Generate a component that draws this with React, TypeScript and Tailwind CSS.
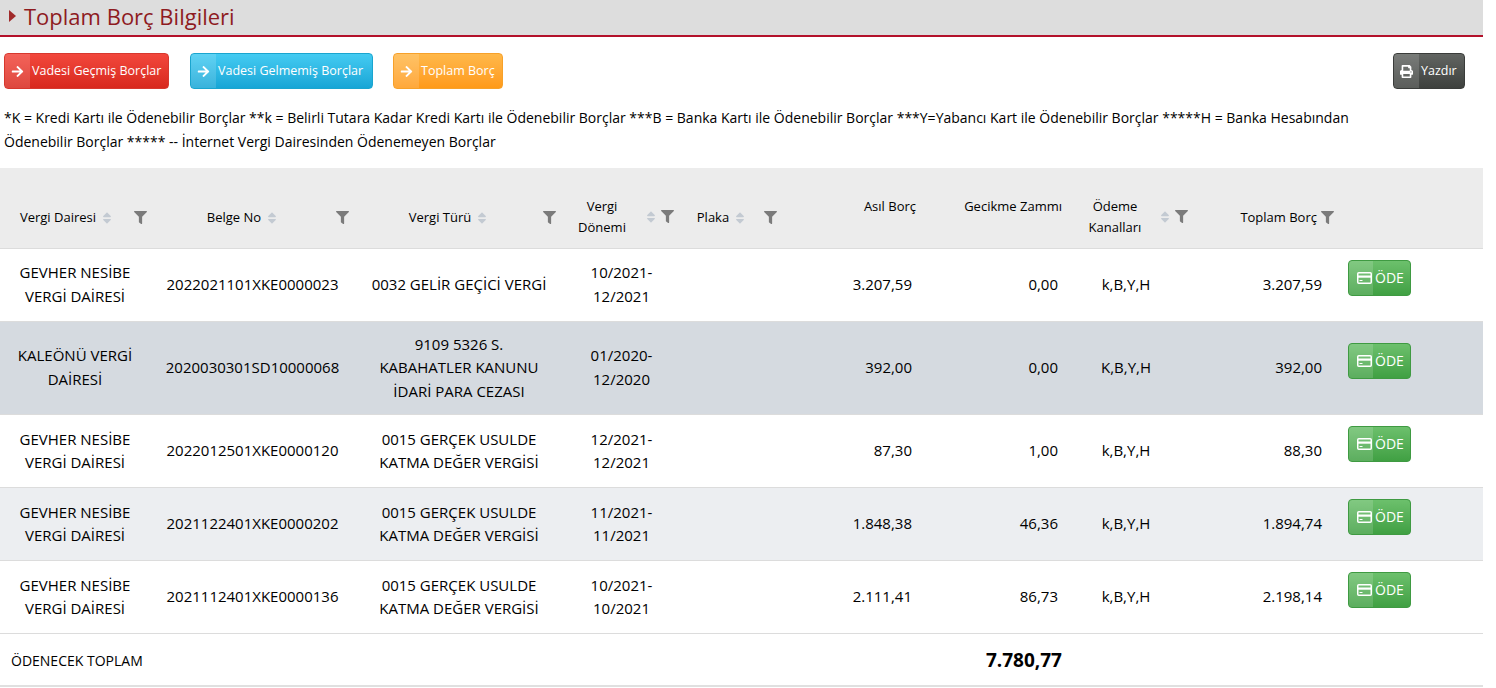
import { FaArrowRight, FaPrint, FaSort, FaFilter } from "react-icons/fa";

type Debt = {
  office: string[];
  docNo: string;
  taxType: string[];
  period: string[];
  plate: string;
  principal: string;
  interest: string;
  channels: string;
  total: string;
};

const debts: Debt[] = [
  {
    office: ["GEVHER NESİBE", "VERGİ DAİRESİ"],
    docNo: "2022021101XKE0000023",
    taxType: ["0032 GELİR GEÇİCİ VERGİ"],
    period: ["10/2021-", "12/2021"],
    plate: "",
    principal: "3.207,59",
    interest: "0,00",
    channels: "k,B,Y,H",
    total: "3.207,59",
  },
  {
    office: ["KALEÖNÜ VERGİ", "DAİRESİ"],
    docNo: "2020030301SD10000068",
    taxType: ["9109 5326 S.", "KABAHATLER KANUNU", "İDARİ PARA CEZASI"],
    period: ["01/2020-", "12/2020"],
    plate: "",
    principal: "392,00",
    interest: "0,00",
    channels: "K,B,Y,H",
    total: "392,00",
  },
  {
    office: ["GEVHER NESİBE", "VERGİ DAİRESİ"],
    docNo: "2022012501XKE0000120",
    taxType: ["0015 GERÇEK USULDE", "KATMA DEĞER VERGİSİ"],
    period: ["12/2021-", "12/2021"],
    plate: "",
    principal: "87,30",
    interest: "1,00",
    channels: "k,B,Y,H",
    total: "88,30",
  },
  {
    office: ["GEVHER NESİBE", "VERGİ DAİRESİ"],
    docNo: "2021122401XKE0000202",
    taxType: ["0015 GERÇEK USULDE", "KATMA DEĞER VERGİSİ"],
    period: ["11/2021-", "11/2021"],
    plate: "",
    principal: "1.848,38",
    interest: "46,36",
    channels: "k,B,Y,H",
    total: "1.894,74",
  },
  {
    office: ["GEVHER NESİBE", "VERGİ DAİRESİ"],
    docNo: "2021112401XKE0000136",
    taxType: ["0015 GERÇEK USULDE", "KATMA DEĞER VERGİSİ"],
    period: ["10/2021-", "10/2021"],
    plate: "",
    principal: "2.111,41",
    interest: "86,73",
    channels: "k,B,Y,H",
    total: "2.198,14",
  },
];

const rowBg = ["bg-white", "bg-[#d5dae0]", "bg-white", "bg-[#eceef1]", "bg-white"];

function Lines({ lines }: { lines: string[] }) {
  return (
    <>
      {lines.map((l, i) => (
        <div key={i}>{l}</div>
      ))}
    </>
  );
}

function Sort() {
  return <FaSort className="text-[#c3cad2] shrink-0" size={14} />;
}

function Filter() {
  return <FaFilter className="text-[#7b7b7b] shrink-0" size={13} />;
}

function CardIcon() {
  return (
    <svg width="15" height="12" viewBox="0 0 15 12" className="shrink-0">
      <rect x="0.75" y="0.75" width="13.5" height="10.5" rx="1" fill="none" stroke="#fff" strokeWidth="1.5" />
      <rect x="1" y="3.5" width="13" height="2.2" fill="#fff" />
      <rect x="2.5" y="8" width="3" height="1" fill="#fff" />
    </svg>
  );
}

function ActionButton({
  label,
  className,
  icon,
}: {
  label: string;
  className: string;
  icon: React.ReactNode;
}) {
  return (
    <button
      className={`flex h-[36px] items-stretch overflow-hidden whitespace-nowrap rounded-[4px] border text-[12.5px] text-white ${className}`}
    >
      <span className="flex w-[25px] shrink-0 items-center justify-center bg-white/15">{icon}</span>
      <span className="flex items-center pl-[2px] pr-[4px]">{label}</span>
    </button>
  );
}

export default function App() {
  return (
    <div className="w-[1483px] bg-white font-['Open_Sans',sans-serif] text-[#1a1a1a]">
      {/* Title */}
      <div className="flex h-[37px] items-center gap-[8px] border-b-2 border-[#b3112a] bg-[#dddddd] pb-[4px] pl-[9px]">
        <span className="h-0 w-0 border-y-[6px] border-l-[7px] border-y-transparent border-l-[#a02a2a]" />
        <h1 className="text-[22px] leading-none text-[#8e1b1f]">Toplam Borç Bilgileri</h1>
      </div>

      {/* Buttons */}
      <div className="mt-[16px] flex items-center pl-[4px] pr-[18px]">
        <ActionButton
          label="Vadesi Geçmiş Borçlar"
          className="w-[165px] border-[#d7382e] bg-gradient-to-b from-[#f2473c] to-[#d8281d]"
          icon={<FaArrowRight size={13} />}
        />
        <ActionButton
          label="Vadesi Gelmemiş Borçlar"
          className="ml-[21px] w-[183px] border-[#1aa5cf] bg-gradient-to-b from-[#43cbf2] to-[#16a6d6]"
          icon={<FaArrowRight size={13} />}
        />
        <ActionButton
          label="Toplam Borç"
          className="ml-[20px] w-[110px] border-[#f7a12a] bg-gradient-to-b from-[#ffb849] to-[#ff9a17]"
          icon={<FaArrowRight size={13} />}
        />
        <div className="flex-1" />
        <ActionButton
          label="Yazdır"
          className="w-[72px] border-[#3a3c3a] bg-gradient-to-b from-[#626562] to-[#3e413e]"
          icon={<FaPrint size={13} />}
        />
      </div>

      {/* Legend */}
      <p className="mt-[17px] pl-[4px] pr-[90px] text-[14px] leading-[24px] text-black">
        *K = Kredi Kartı ile Ödenebilir Borçlar **k = Belirli Tutara Kadar Kredi Kartı ile Ödenebilir Borçlar ***B = Banka
        Kartı ile Ödenebilir Borçlar ***Y=Yabancı Kart ile Ödenebilir Borçlar *****H = Banka Hesabından Ödenebilir Borçlar
        ***** -- İnternet Vergi Dairesinden Ödenemeyen Borçlar
      </p>

      {/* Table */}
      <table className="mt-[14px] w-full table-fixed border-collapse text-[15px]">
        <colgroup>
          <col className="w-[150px]" />
          <col className="w-[205px]" />
          <col className="w-[208px]" />
          <col className="w-[117px]" />
          <col className="w-[110px]" />
          <col className="w-[140px]" />
          <col className="w-[145px]" />
          <col className="w-[120px]" />
          <col className="w-[145px]" />
          <col className="w-[143px]" />
        </colgroup>
        <thead>
          <tr className="h-[80px] border-b border-[#dcdcdc] bg-[#ececec] text-[13px] text-black">
            <th className="p-0 align-middle font-normal">
              <div className="flex items-center pt-[20px] pr-[3px]">
                <div className="flex flex-1 items-center justify-center gap-[4px]">
                  <span>Vergi Dairesi</span>
                  <Sort />
                </div>
                <Filter />
              </div>
            </th>
            <th className="p-0 align-middle font-normal">
              <div className="flex items-center pt-[20px] pr-[6px]">
                <div className="flex flex-1 items-center justify-center gap-[4px]">
                  <span>Belge No</span>
                  <Sort />
                </div>
                <Filter />
              </div>
            </th>
            <th className="p-0 align-middle font-normal">
              <div className="flex items-center pt-[20px] pr-[7px]">
                <div className="flex flex-1 items-center justify-center gap-[4px]">
                  <span>Vergi Türü</span>
                  <Sort />
                </div>
                <Filter />
              </div>
            </th>
            <th className="p-0 align-middle font-normal">
              <div className="flex items-center gap-[3px] pt-[18px] pr-[6px] leading-[21px]">
                <div className="flex-1 text-center">
                  Vergi
                  <br />
                  Dönemi
                </div>
                <Sort />
                <Filter />
              </div>
            </th>
            <th className="p-0 align-middle font-normal">
              <div className="flex items-center pt-[20px] pr-[13px]">
                <div className="flex flex-1 items-center justify-center gap-[4px]">
                  <span>Plaka</span>
                  <Sort />
                </div>
                <Filter />
              </div>
            </th>
            <th className="p-0 pr-[14px] text-right align-middle font-normal">
              <div className="pb-[2px]">Asıl Borç</div>
            </th>
            <th className="p-0 pr-[13px] text-right align-middle font-normal">
              <div className="pb-[2px]">Gecikme Zammı</div>
            </th>
            <th className="p-0 align-middle font-normal">
              <div className="flex items-center gap-[3px] pt-[18px] pr-[7px] leading-[21px]">
                <div className="flex-1 text-center">
                  Ödeme
                  <br />
                  Kanalları
                </div>
                <Sort />
                <Filter />
              </div>
            </th>
            <th className="p-0 align-middle font-normal">
              <div className="flex items-center justify-end gap-[4px] pt-[20px] pr-[6px]">
                <span>Toplam Borç</span>
                <Filter />
              </div>
            </th>
            <th className="p-0" />
          </tr>
        </thead>
        <tbody className="leading-[23.5px] text-black">
          {debts.map((d, i) => (
            <tr key={d.docNo} className={`h-[73px] border-b border-[#dcdcdc] ${rowBg[i]}`}>
              <td className="px-[2px] py-[11px] text-center">
                <Lines lines={d.office} />
              </td>
              <td className="px-[2px] py-[11px] text-center">{d.docNo}</td>
              <td className="px-[2px] py-[11px] text-center">
                <Lines lines={d.taxType} />
              </td>
              <td className="px-[2px] py-[11px] text-center">
                <Lines lines={d.period} />
              </td>
              <td className="px-[2px] py-[11px] text-center">{d.plate}</td>
              <td className="py-[11px] pr-[18px] text-right">{d.principal}</td>
              <td className="py-[11px] pr-[17px] text-right">{d.interest}</td>
              <td className="py-[11px] pr-[18px] text-center">{d.channels}</td>
              <td className="py-[11px] pr-[18px] text-right">{d.total}</td>
              <td className="py-[11px] pl-[8px]">
                <button className="mb-[14px] flex h-[36px] w-[63px] items-stretch overflow-hidden rounded-[4px] border border-[#3f9a42] bg-gradient-to-b from-[#6cc06c] to-[#40a043] text-[14px] font-normal text-white">
                  <span className="flex w-[24px] items-center justify-end bg-white/15 pr-[1px]">
                    <CardIcon />
                  </span>
                  <span className="flex items-center pl-[2px]">ÖDE</span>
                </button>
              </td>
            </tr>
          ))}
          <tr className="h-[52px] border-b-2 border-[#e0e0e0]">
            <td colSpan={6} className="pl-[11px] pt-[2px] text-[14px]">
              ÖDENECEK TOPLAM
            </td>
            <td className="pr-[13px] pt-[2px] text-right text-[19px] font-bold">7.780,77</td>
            <td colSpan={3} />
          </tr>
        </tbody>
      </table>
    </div>
  );
}
